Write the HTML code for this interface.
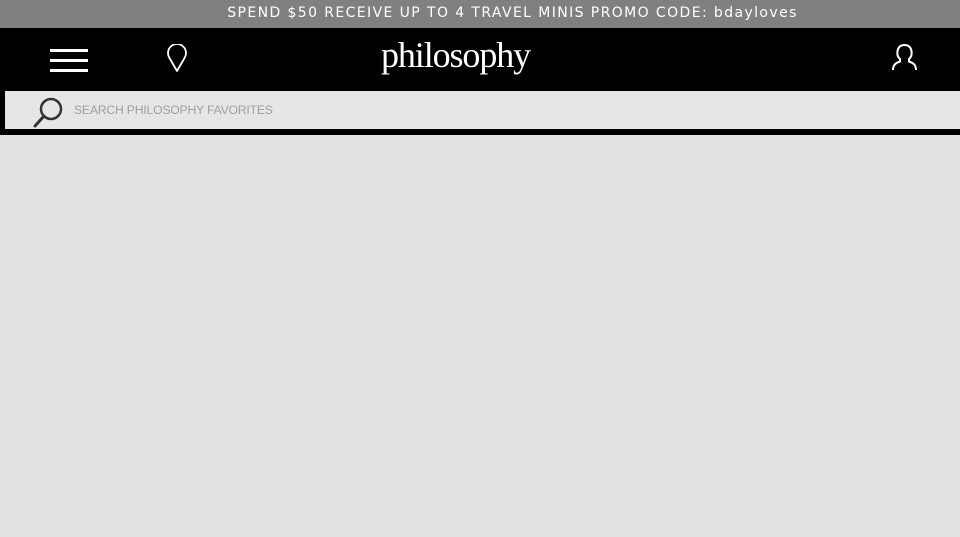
<!DOCTYPE html>
<html><head><style>
body{margin:0;width:960px;height:537px;background:#e1e1e1;overflow:hidden;font-family:"DejaVu Sans","Liberation Sans",sans-serif}
.promo{height:28px;background:#808080;color:#fff;font-size:14px;letter-spacing:1.4px;text-align:center;line-height:27px;padding-left:65px;box-sizing:border-box}
.hdr{position:relative;height:107px;background:#000}
.bar{position:absolute;left:50px;width:38px;height:3px;background:#fff}
.logo{position:absolute;left:381px;top:6px;font-family:"Liberation Serif",serif;font-size:36px;color:#fff;letter-spacing:-1.1px}
.search{position:absolute;left:5px;top:63px;right:0;height:38px;background:#e6e6e6}
.search span{position:absolute;left:69px;top:12px;font-size:12.2px;color:#a0a0a0;font-family:"Liberation Sans",sans-serif;letter-spacing:-0.2px}
</style></head><body>
<div class="promo">SPEND $50 RECEIVE UP TO 4 TRAVEL MINIS PROMO CODE: bdayloves</div>
<div class="hdr">
<div class="bar" style="top:21px"></div><div class="bar" style="top:31px"></div><div class="bar" style="top:41px"></div>
<svg style="position:absolute;left:166px;top:16px" width="22" height="29" viewBox="0 0 22 29"><path d="M11 27 L3.5 14 A9 9 0 1 1 18.5 14 Z" fill="none" stroke="#fff" stroke-width="1.8" stroke-linejoin="round"/></svg>
<div class="logo">philosophy</div>
<svg style="position:absolute;left:890px;top:15px" width="30" height="30" viewBox="0 0 30 30"><path d="M3 27 C3 21 7 19.5 10 18.5 L10 16 C7.5 14 7 11 7.5 8 C8.5 3 12 2 14.5 2 C17 2 20.5 3 21.5 8 C22 11 21.5 14 19 16 L19 18.5 C22 19.5 26 21 26 27" fill="none" stroke="#fff" stroke-width="2"/></svg>
<div class="search">
<svg style="position:absolute;left:27px;top:4px" width="36" height="34" viewBox="0 0 36 34"><circle cx="19" cy="14" r="10" fill="none" stroke="#333" stroke-width="2.5"/><path d="M12 21 L3 31" stroke="#333" stroke-width="3" stroke-linecap="round"/></svg>
<span>SEARCH PHILOSOPHY FAVORITES</span>
</div>
</div>
</body></html>
